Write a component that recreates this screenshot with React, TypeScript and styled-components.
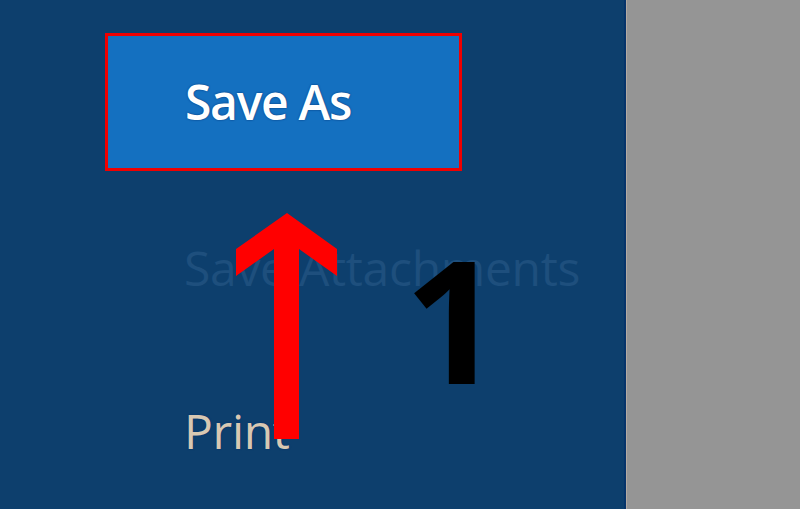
import React from "react";
import styled, { createGlobalStyle } from "styled-components";

const GlobalStyle = createGlobalStyle`
  html, body {
    margin: 0;
    padding: 0;
    background: #959595;
  }
  body {
    font-family: "Open Sans", "Noto Sans", sans-serif;
  }
`;

const Screen = styled.div`
  position: relative;
  width: 800px;
  height: 509px;
  display: flex;
  overflow: hidden;
`;

const Sidebar = styled.div`
  width: 626px;
  height: 100%;
  background: #0d3f6d;
  border-right: 2px solid #06346a;
  padding: 33px 0 0 105px;
  box-sizing: border-box;
  display: flex;
  flex-direction: column;
  gap: 25px;
`;

const Content = styled.div`
  flex: 1;
  background: #959595;
  border-left: 1px solid #b3aaa3;
`;

type ItemProps = { $tone: "active" | "disabled" | "normal" };

const MenuItem = styled.div<ItemProps>`
  width: 357px;
  height: 138px;
  box-sizing: border-box;
  padding-left: ${(p) => (p.$tone === "active" ? "77px" : "76px")};
  line-height: ${(p) => (p.$tone === "active" ? "132px" : "138px")};
  font-size: 48px;
  letter-spacing: ${(p) => (p.$tone === "active" ? "-1.3px" : "-0.3px")};
  white-space: nowrap;
  font-weight: ${(p) => (p.$tone === "active" ? 600 : 400)};
  color: ${(p) =>
    p.$tone === "active" ? "#ffffff" : p.$tone === "disabled" ? "#1e4f7d" : "#d8c8b2"};
  background: ${(p) => (p.$tone === "active" ? "#1470c0" : "transparent")};
  border: 3px solid ${(p) => (p.$tone === "active" ? "#f00000" : "transparent")};
  text-shadow: ${(p) => (p.$tone === "disabled" ? "none" : "0 0 2px #032f70")};
`;

const Arrow = styled.svg`
  position: absolute;
  left: 236px;
  top: 213px;
  width: 101px;
  height: 226px;
`;

const StepNumber = styled.div`
  position: absolute;
  left: 404px;
  top: 232px;
  font-family: "Open Sans", sans-serif;
  font-weight: 700;
  font-size: 171px;
  line-height: 1;
  color: #000;
`;

export default function App() {
  return (
    <>
      <GlobalStyle />
      <Screen>
        <Sidebar>
          <MenuItem $tone="active">Save As</MenuItem>
          <MenuItem $tone="disabled">Save Attachments</MenuItem>
          <MenuItem $tone="normal">Print</MenuItem>
        </Sidebar>
        <Content />
        <Arrow viewBox="236 213 101 226">
          <polygon
            fill="#ff0000"
            points="287,213 337,249 337,276 299,249 299,439 274,439 274,249 236,276 236,249"
          />
        </Arrow>
        <StepNumber>1</StepNumber>
      </Screen>
    </>
  );
}
